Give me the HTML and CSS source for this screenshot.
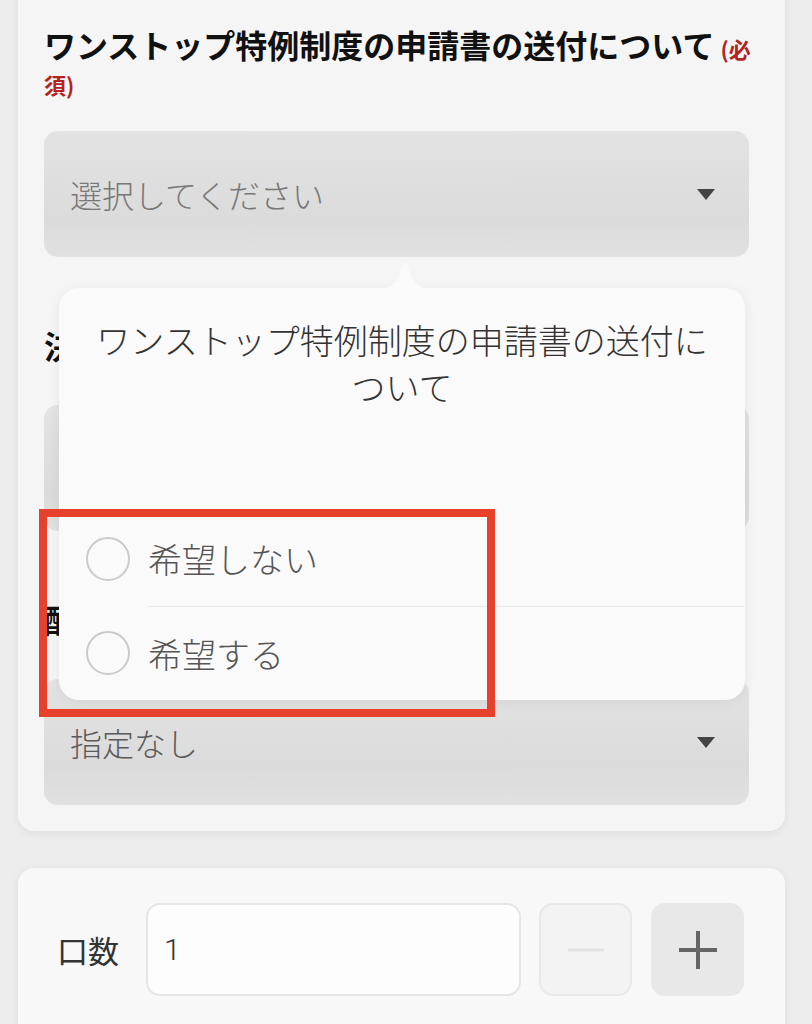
FILE: index.html
```html
<!DOCTYPE html>
<html lang="ja">
<head>
    <meta charset="utf-8">
    <title>お申し込み</title>
    <link rel="stylesheet" href="styles.css">
</head>
<body>
    <div class="page">
        <div class="card">
            <div class="field">
                <div class="field-label first">ワンストップ特例制度の申請書の送付について<span class="required">(必須)</span></div>
                <div class="select">
                    <span class="placeholder">選択してください</span>
                    <span class="caret"></span>
                </div>
            </div>

            <div class="field">
                <div class="field-label">決済方法<span class="required">(必須)</span></div>
                <div class="select">
                    <span class="placeholder">選択してください</span>
                    <span class="caret"></span>
                </div>
            </div>

            <div class="field">
                <div class="field-label">配送希望日</div>
                <div class="select">
                    <span class="value">指定なし</span>
                    <span class="caret"></span>
                </div>
            </div>
        </div>

        <div class="card qty-card">
            <div class="qty-row">
                <span class="qty-label">口数</span>
                <div class="qty-input">1</div>
                <button class="qty-btn minus" disabled><span class="bar-h"></span></button>
                <button class="qty-btn plus"><span class="bar-h"></span><span class="bar-v"></span></button>
            </div>
        </div>

        <!-- picker popover opened from the first select -->
        <div class="popover">
            <svg class="popover-arrow" width="64" height="30" viewBox="0 0 64 30">
                <path d="M0 30 C14 30 20 26 26 16 L29 5 Q32 0 35 5 L38 16 C44 26 50 30 64 30 Z" fill="#fafafa"/>
            </svg>
            <div class="popover-title">ワンストップ特例制度の申請書の送付に<br>ついて</div>
            <div class="options">
                <div class="option">
                    <span class="radio"></span>
                    <span class="option-text">希望しない</span>
                </div>
                <div class="option">
                    <span class="radio"></span>
                    <span class="option-text">希望する</span>
                </div>
            </div>
        </div>

        <!-- annotation box -->
        <div class="highlight"></div>
    </div>
</body>
</html>
```

FILE: styles.css
```css
body {
    margin: 0;
    background-color: #ededed;
    font-family: "Noto Sans CJK JP", "Noto Sans", sans-serif;
    color: #222;
}
.page {
    position: relative;
    padding: 0 27px 0 18px;
    height: 1024px;
    overflow: hidden;
}
.card {
    background-color: #f5f5f5;
    border-radius: 16px;
    box-shadow: 0 2px 10px rgba(0, 0, 0, 0.07);
    margin-top: -24px;
    padding: 50px 26px 26px 26px;
}
.field + .field {
    margin-top: 70px;
}
.field-label {
    font-size: 32px;
    font-weight: 700;
    line-height: 36px;
    margin-bottom: 42px;
    color: #111;
}
.field-label.first {
    margin-bottom: 33px;
}
.required {
    font-size: 22px;
    line-height: 1;
    color: #b0261e;
    margin-left: 6px;
}
.select {
    height: 126px;
    margin-right: 10px;
    border-radius: 14px;
    background: linear-gradient(#e3e3e3, #dbdbdb 70%, #e1e1e1);
    display: flex;
    align-items: center;
    justify-content: space-between;
    padding: 0 34px 0 26px;
    box-sizing: border-box;
}
.placeholder {
    font-size: 32px;
    font-weight: 300;
    color: #787878;
}
.value {
    font-size: 32px;
    font-weight: 300;
    color: #5a5a5a;
}
.caret {
    width: 0;
    height: 0;
    border-left: 9px solid transparent;
    border-right: 9px solid transparent;
    border-top: 11px solid #444;
}

.qty-card {
    margin-top: 37px;
    padding: 35px 0 60px 39px;
    background-color: #f8f8f8;
}
.qty-row {
    display: flex;
    align-items: center;
}
.qty-label {
    font-size: 31px;
    color: #333;
    margin-right: 27px;
}
.qty-input {
    width: 375px;
    height: 93px;
    box-sizing: border-box;
    background-color: #fdfdfd;
    border: 2px solid #e6e6e6;
    border-radius: 14px;
    font-family: Roboto, "Noto Sans", sans-serif;
    font-size: 30px;
    font-weight: 300;
    color: #333;
    padding-left: 16px;
    display: flex;
    align-items: center;
}
.qty-btn {
    position: relative;
    width: 93px;
    height: 93px;
    border-radius: 14px;
    border: 2px solid #e9e9e9;
    padding: 0;
    margin-left: 18px;
}
.qty-btn.minus {
    background-color: #f3f3f3;
}
.qty-btn.plus {
    background-color: #e8e8e8;
    border-color: #e8e8e8;
    margin-left: 19px;
}
.bar-h, .bar-v {
    position: absolute;
    left: 50%;
    top: 50%;
    transform: translate(-50%, -50%);
}
.minus .bar-h {
    width: 36px;
    height: 3px;
    background-color: #e2e2e2;
}
.plus .bar-h {
    width: 38px;
    height: 4px;
    background-color: #666;
}
.plus .bar-v {
    width: 4px;
    height: 38px;
    background-color: #666;
}

.popover {
    position: absolute;
    left: 59px;
    top: 288px;
    width: 686px;
    height: 412px;
    background-color: #fafafa;
    border-radius: 20px;
    box-shadow: 0 2px 14px rgba(0, 0, 0, 0.06);
}
.popover-arrow {
    position: absolute;
    top: -28px;
    left: 314px;
}
.popover-title {
    padding: 28px 20px 0;
    font-size: 34px;
    font-weight: 300;
    line-height: 47px;
    text-align: center;
    color: #333;
}
.options {
    margin-top: 102px;
}
.option {
    height: 94px;
    display: flex;
    align-items: center;
    padding-left: 27px;
}
.radio {
    width: 44px;
    height: 44px;
    box-sizing: border-box;
    border: 2px solid #cacaca;
    border-radius: 50%;
    flex-shrink: 0;
}
.option-text {
    flex: 1;
    height: 100%;
    margin-left: 18px;
    display: flex;
    align-items: center;
    font-size: 34px;
    font-weight: 300;
    color: #555;
}
.option:first-child .option-text {
    border-bottom: 1px solid #ebebeb;
}

.highlight {
    position: absolute;
    left: 39px;
    top: 509px;
    width: 456px;
    height: 208px;
    box-sizing: border-box;
    border: 8px solid #e8412b;
}
```
